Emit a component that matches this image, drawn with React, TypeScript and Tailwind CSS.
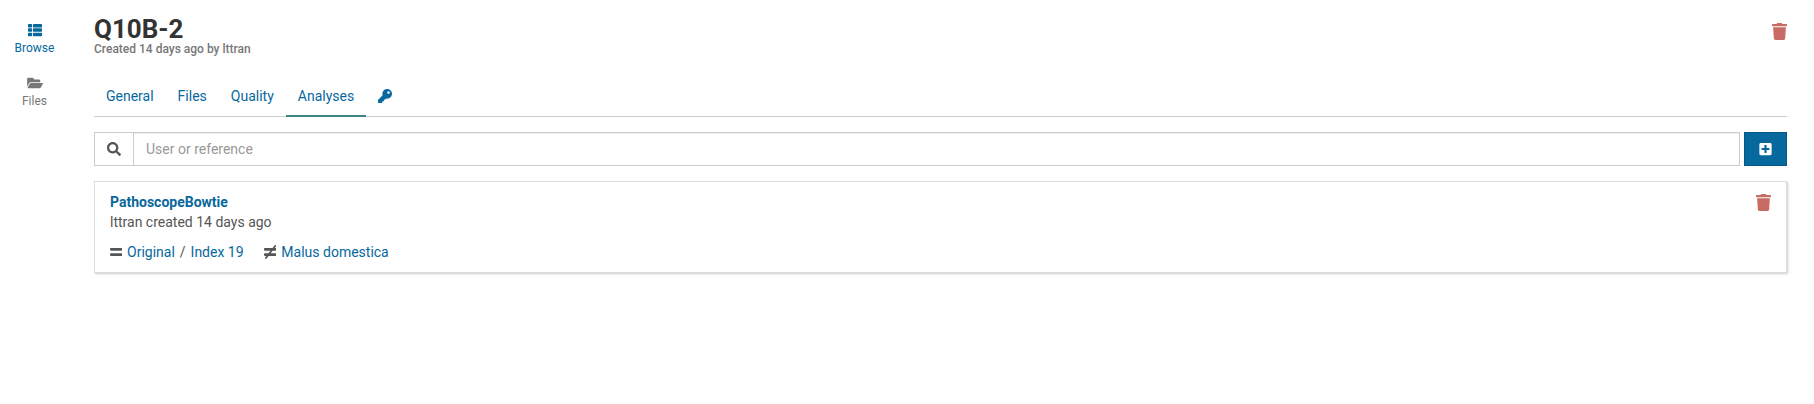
import React from "react";
import {
  FaEquals,
  FaFolderOpen,
  FaKey,
  FaNotEqual,
  FaPlusSquare,
  FaSearch,
  FaThList,
  FaTrash,
} from "react-icons/fa";

const tabs = ["General", "Files", "Quality", "Analyses"];

function Sidebar() {
  return (
    <nav className="flex w-[69px] shrink-0 flex-col items-center pt-[23px] text-[12px] leading-[17px]">
      <a className="flex h-[53px] flex-col items-center text-[#07689d]">
        <FaThList size={14} />
        <span className="mt-[3px]">Browse</span>
      </a>
      <a className="flex flex-col items-center text-[#777777]">
        <FaFolderOpen size={14} className="w-4" />
        <span className="mt-[3px]">Files</span>
      </a>
    </nav>
  );
}

function Header() {
  return (
    <header className="flex h-[78px] justify-between pt-[14px]">
      <div>
        <h1 className="pt-px text-[26px] leading-[28px] font-bold text-[#333333]">Q10B-2</h1>
        <p className="text-[12px] leading-[12px] font-medium text-[#777777]">
          Created 14 days ago by lttran
        </p>
      </div>
      <FaTrash size={17} className="mt-[9px] w-[15px] text-[#c76b64]" />
    </header>
  );
}

function Tabs() {
  return (
    <div className="flex h-[39px] border-b border-[#cccccc] text-[#07689d]">
      {tabs.map((tab) => (
        <a
          key={tab}
          className={
            tab === "Analyses"
              ? "-mb-px border-b-2 border-[#3c8786] px-3 pt-2"
              : "px-3 pt-2"
          }
        >
          {tab}
        </a>
      ))}
      <a className="px-3 pt-[11px]">
        <FaKey size={14} />
      </a>
    </div>
  );
}

function Toolbar() {
  return (
    <div className="mt-[15px] flex h-[34px]">
      <div className="flex w-[39px] items-center justify-center border border-r-0 border-[#cccccc]">
        <FaSearch size={14} />
      </div>
      <input
        placeholder="User or reference"
        className="min-w-0 flex-1 border border-[#cccccc] px-3 shadow-[inset_0_1px_1px_rgba(0,0,0,0.075)] outline-none placeholder:text-[#999999]"
      />
      <button className="ml-1 flex w-[43px] items-center justify-center border border-[#065785] bg-[#07689d] text-white">
        <FaPlusSquare size={14} className="mr-px w-[13px]" />
      </button>
    </div>
  );
}

function AnalysisCard() {
  return (
    <article className="mt-[15px] flex h-[92px] justify-between border border-[#dddddd] px-[15px] pt-[10px] shadow-[1px_1px_2px_0_rgba(0,0,0,0.2)]">
      <div>
        <h2 className="leading-5 font-bold text-[#07689d]">PathoscopeBowtie</h2>
        <p className="leading-5">lttran created 14 days ago</p>
        <div className="mt-[10px] flex items-center">
          <FaEquals size={14} className="w-[12.25px]" />
          <a className="ml-[4.75px] text-[#07689d]">Original</a>
          <span className="mx-[5px]">/</span>
          <a className="text-[#07689d]">Index 19</a>
          <FaNotEqual size={14} className="ml-5 w-[12.25px]" />
          <a className="ml-[5.5px] text-[#07689d]">Malus domestica</a>
        </div>
      </div>
      <FaTrash size={17} className="mt-[2px] w-[15px] text-[#c76b64]" />
    </article>
  );
}

export default function App() {
  return (
    <div className="flex h-[404px] bg-white font-[Roboto,sans-serif] text-[14px] leading-5 text-[#555555]">
      <Sidebar />
      <main className="mr-[27px] ml-[25px] min-w-0 flex-1">
        <Header />
        <Tabs />
        <Toolbar />
        <AnalysisCard />
      </main>
    </div>
  );
}
